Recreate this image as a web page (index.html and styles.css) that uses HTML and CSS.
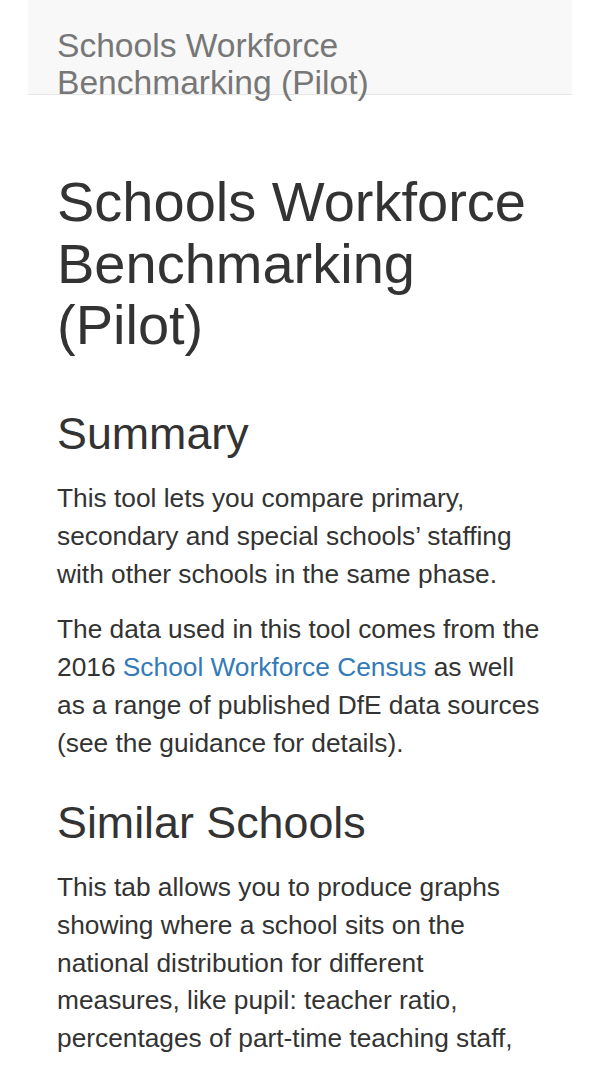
FILE: index.html
```html
<!DOCTYPE html>
<html lang="en">
<head>
<meta charset="utf-8">
<title>Schools Workforce Benchmarking (Pilot)</title>
<link rel="stylesheet" href="styles.css">
</head>
<body>
<header class="navbar">
  <span class="brand">Schools Workforce Benchmarking (Pilot)</span>
</header>
<main class="content">
  <h1 class="title">Schools Workforce Benchmarking (Pilot)</h1>
  <h2 class="section">Summary</h2>
  <p class="text">This tool lets you compare primary, secondary and special schools’ staffing with other schools in the same phase.</p>
  <p class="text">The data used in this tool comes from the 2016 <a class="link" href="#">School Workforce Census</a> as well as a range of published DfE data sources (see the guidance for details).</p>
  <h2 class="section">Similar Schools</h2>
  <p class="text">This tab allows you to produce graphs showing where a school sits on the national distribution for different measures, like pupil: teacher ratio, percentages of part-time teaching staff, and teacher headcount. By selecting the school you want to look at, you can see how it compares with similar schools.</p>
</main>
</body>
</html>
```

FILE: styles.css
```css
html, body {
  margin: 0;
  padding: 0;
  background: #ffffff;
}

body {
  font-family: "Liberation Sans", Arial, Helvetica, sans-serif;
  color: #333333;
  overflow: hidden;
}

.navbar {
  margin: 0 28px;
  height: 94px;
  background: #f8f8f8;
  border-bottom: 1px solid #e7e7e7;
}

.brand {
  display: block;
  max-width: 420px;
  padding: 27px 0 0 29px;
  font-size: 33.6px;
  line-height: 37px;
  color: #777777;
}

.content {
  padding: 0 57px;
}

.title {
  margin: 76px 0 52px;
  font-size: 56px;
  line-height: 61.6px;
  font-weight: 400;
}

.section {
  margin: 34px 0 21px;
  font-size: 44.8px;
  line-height: 51.3px;
  font-weight: 400;
}

.text {
  margin: 0 0 18px;
  font-size: 26.3px;
  line-height: 37.8px;
}

.link {
  color: #337ab7;
  text-decoration: none;
}
```
